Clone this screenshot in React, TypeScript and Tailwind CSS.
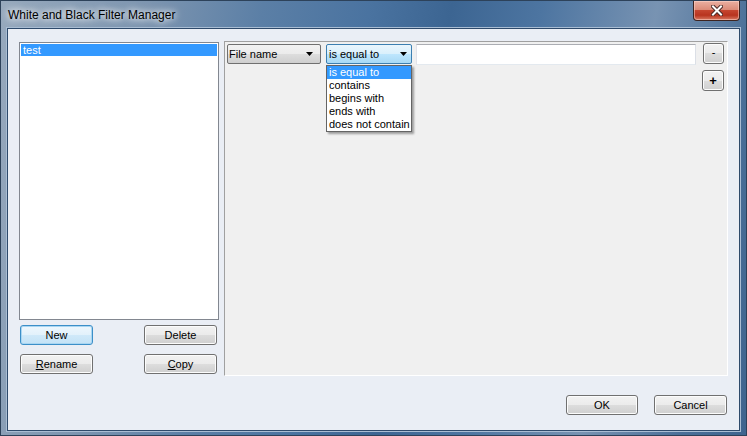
import type { ReactNode } from "react";

const font = "font-['Liberation_Sans',Arial,sans-serif]";

function Arrow() {
  return (
    <svg width="7" height="4" viewBox="0 0 7 4" className="shrink-0">
      <path d="M0 0h7L3.5 4z" fill="#000" />
    </svg>
  );
}

function Btn({ children, className = "", focused = false }: { children: ReactNode; className?: string; focused?: boolean }) {
  const skin = focused
    ? "border-[#3c8fc8] bg-[linear-gradient(#eef7fd_0%,#e2f1fb_50%,#d0e9f9_50%,#c3e2f6_100%)] shadow-[inset_0_0_0_1px_#a9d6f2]"
    : "border-[#707070] bg-[linear-gradient(#f2f2f2_0%,#ebebeb_50%,#dddddd_50%,#cfcfcf_100%)] shadow-[inset_0_0_0_1px_#fcfcfc]";
  return (
    <div className={`flex h-[20px] items-center justify-center rounded-[3px] border text-[11px] text-black ${skin} ${className}`}>
      {children}
    </div>
  );
}

const options = ["is equal to", "contains", "begins with", "ends with", "does not contain"];

export default function App() {
  return (
    <div
      className={`${font} flex h-[436px] w-[747px] flex-col overflow-hidden border border-[#2d425a] bg-[linear-gradient(100deg,#97a9bd_0%,#7d95b0_18%,#5b7fa6_32%,#4a73a0_45%,#3c6592_55%,#4d75a1_66%,#7893b2_80%,#4a6f98_92%,#3f648e_100%)]`}
    >
      {/* title bar */}
      <div className="flex h-[27px] shrink-0 items-start">
        <div className="pl-[7px] pt-[7px] text-[12px] leading-[14px] text-black [text-shadow:0_0_6px_#ffffff,0_0_10px_#ffffff]">
          White and Black Filter Manager
        </div>
        <div className="ml-auto mr-[6px] flex h-[20px] w-[47px] items-center justify-center rounded-b-[4px] border border-t-0 border-[#3d2420] bg-[linear-gradient(#eab0a2_0%,#dc8c79_45%,#c5452f_50%,#b8341f_75%,#d97a63_100%)] shadow-[inset_0_0_0_1px_rgba(255,220,210,0.5)]">
          <svg width="12" height="11" viewBox="0 0 12 11">
            <path d="M2 1.5l8 8M10 1.5l-8 8" stroke="#4a2a26" strokeWidth="4" strokeLinecap="square" />
            <path d="M2 1.5l8 8M10 1.5l-8 8" stroke="#ffffff" strokeWidth="2" strokeLinecap="square" />
          </svg>
        </div>
      </div>

      {/* client area */}
      <div className="mx-[6px] mb-[4px] flex flex-1 flex-col border border-[#2e4a6b] bg-[#eaeef5] shadow-[0_0_0_1px_#a9bdd3]">
        <div className="flex items-start gap-[5px] pl-[11px] pt-[12px]">
          {/* left column */}
          <div className="mt-px flex w-[200px] flex-col">
            <div className="h-[278px] border border-[#828790] bg-white p-px">
              <div className="h-[12px] bg-[#3399ff] pl-[2px] text-[11px] leading-[12px] text-white">test</div>
            </div>
            <div className="mt-[5px] flex justify-between pl-px pr-[2px]">
              <Btn focused className="w-[73px]">New</Btn>
              <Btn className="w-[73px]">Delete</Btn>
            </div>
            <div className="mt-[9px] flex justify-between pl-px pr-[2px]">
              <Btn className="w-[73px]">
                <span className="underline underline-offset-[1px]">R</span>ename
              </Btn>
              <Btn className="w-[73px]">
                <span className="underline underline-offset-[1px]">C</span>opy
              </Btn>
            </div>
          </div>

          {/* right panel */}
          <div className="relative h-[335px] w-[504px] border border-b-white border-l-[#a0a0a0] border-r-white border-t-[#a0a0a0] bg-[#f0f0f0] pl-[2px] pr-[3px] pt-[2px]">
            <div className="flex items-start">
              <div className="flex h-[20px] w-[94px] items-center justify-between rounded-[2px] border border-[#707070] bg-[linear-gradient(#f2f2f2_0%,#ebebeb_50%,#dddddd_50%,#cfcfcf_100%)] pl-[1px] pr-[7px] text-[11px] text-black">
                <span>File name</span>
                <Arrow />
              </div>
              <div className="ml-[5px] flex h-[20px] w-[86px] items-center justify-between rounded-[2px] border border-[#3c7fb1] bg-[linear-gradient(#eaf6fd_0%,#d9f0fc_50%,#bee6fd_50%,#a7d9f5_100%)] pl-[2px] pr-[4px] text-[11px] text-black">
                <span>is equal to</span>
                <Arrow />
              </div>
              <div className="ml-[4px] h-[21px] w-[280px] border border-b-[#e3e9ef] border-l-[#e2e3ea] border-r-[#dbdfe6] border-t-[#abadb3] bg-white" />
              <Btn className="-mt-px ml-[7px] h-[21px] w-[21px] pb-[2px]">-</Btn>
            </div>
            <div className="mt-[5px] flex justify-end">
              <Btn className="h-[21px] w-[22px] text-[13px] font-bold">+</Btn>
            </div>

            {/* open dropdown list */}
            <div className="absolute left-[101px] top-[23px] w-[86px] border border-[#646464] bg-white shadow-[2px_2px_2px_rgba(0,0,0,0.35)]">
              {options.map((o, i) => (
                <div
                  key={o}
                  className={`h-[13px] pl-[2px] text-[11px] leading-[13px] ${i === 0 ? "bg-[#3399ff] text-white" : "text-black"}`}
                >
                  {o}
                </div>
              ))}
            </div>
          </div>
        </div>

        {/* bottom buttons */}
        <div className="mt-[19px] flex justify-end gap-[16px] pr-[12px]">
          <Btn className="w-[72px]">OK</Btn>
          <Btn className="w-[73px]">Cancel</Btn>
        </div>
      </div>
    </div>
  );
}
